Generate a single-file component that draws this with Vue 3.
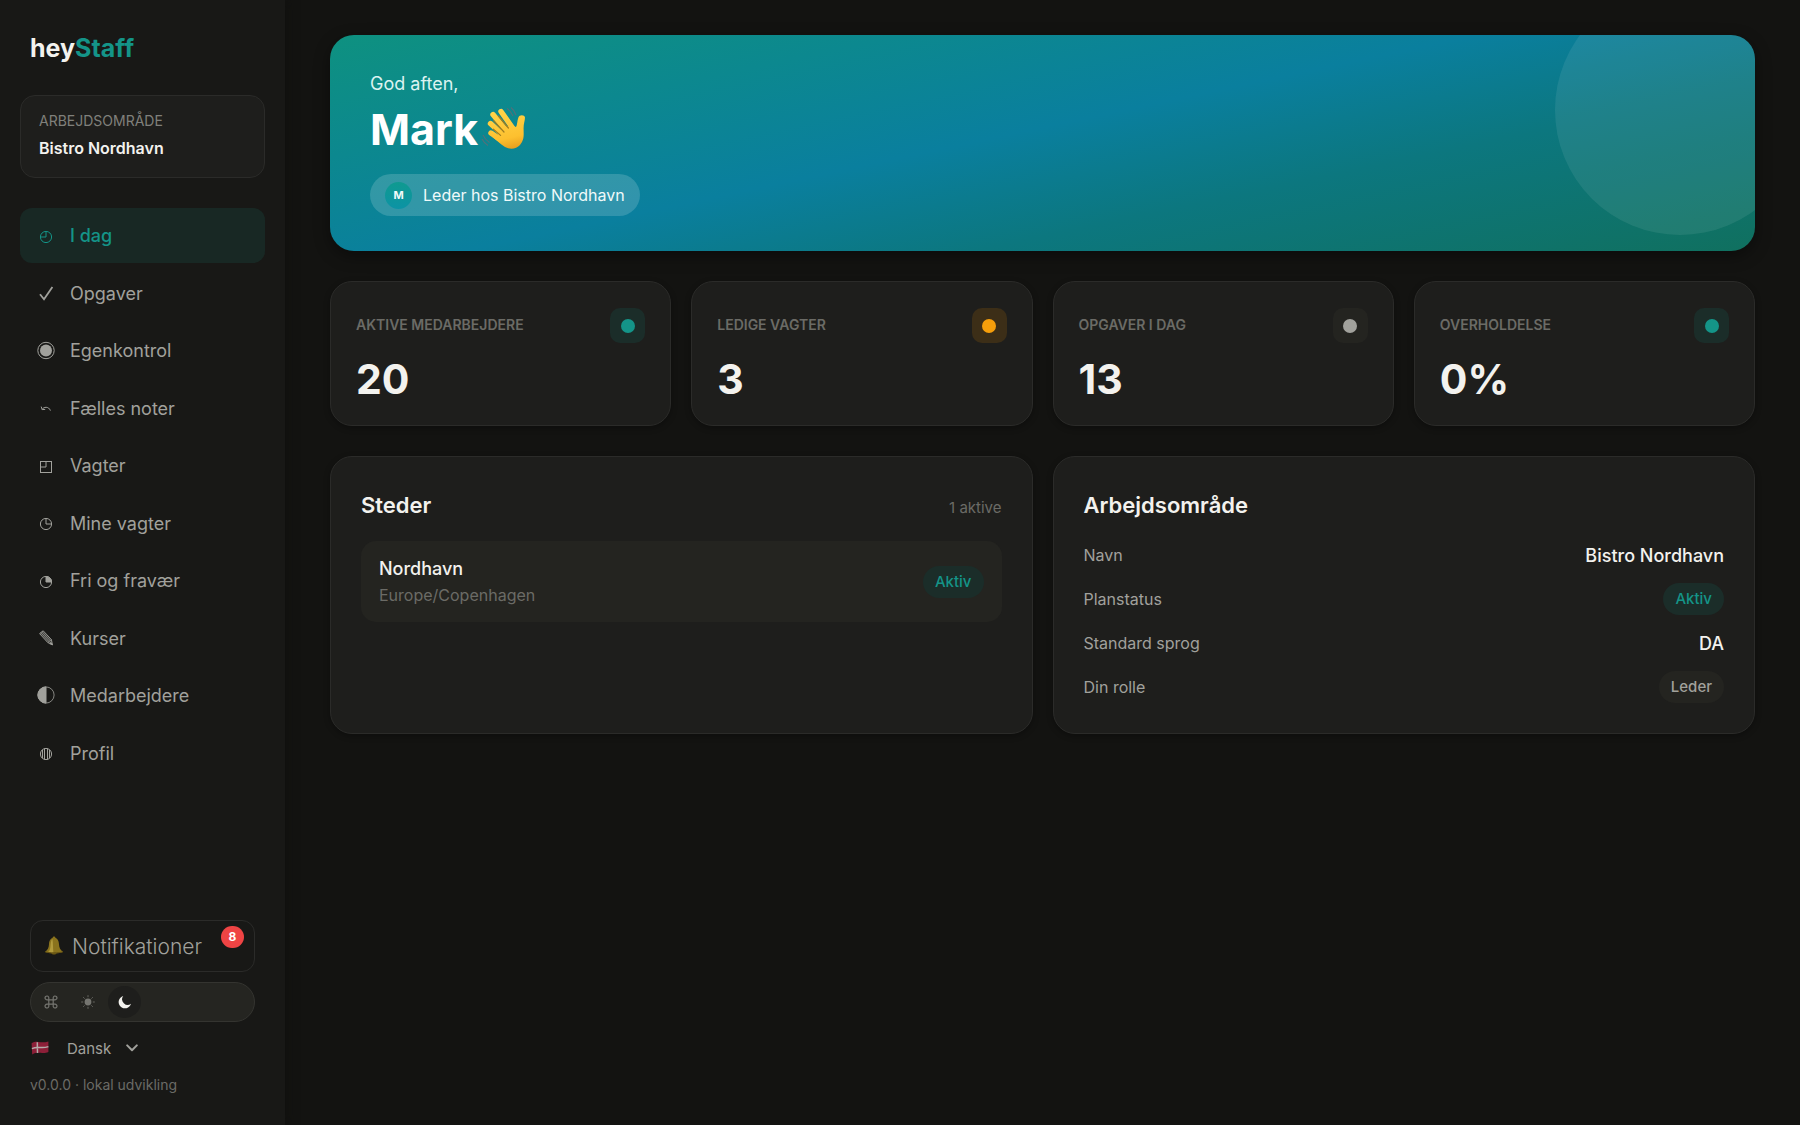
<script setup>
import { ref } from 'vue';

const activeNav = ref('today');
const theme = ref('dark');
const language = ref('da');

const navItems = [
  { id: 'today', label: 'I dag' },
  { id: 'tasks', label: 'Opgaver' },
  { id: 'control', label: 'Egenkontrol' },
  { id: 'notes', label: 'Fælles noter' },
  { id: 'shifts', label: 'Vagter' },
  { id: 'myshifts', label: 'Mine vagter' },
  { id: 'absence', label: 'Fri og fravær' },
  { id: 'courses', label: 'Kurser' },
  { id: 'staff', label: 'Medarbejdere' },
  { id: 'profile', label: 'Profil' },
];

const stats = [
  { label: 'Aktive medarbejdere', value: '20', tone: 'teal' },
  { label: 'Ledige vagter', value: '3', tone: 'amber' },
  { label: 'Opgaver i dag', value: '13', tone: 'neutral' },
  { label: 'Overholdelse', value: '0%', tone: 'teal' },
];

const workspaceRows = [
  { label: 'Navn', value: 'Bistro Nordhavn' },
  { label: 'Planstatus', value: 'Aktiv', badge: 'teal' },
  { label: 'Standard sprog', value: 'DA' },
  { label: 'Din rolle', value: 'Leder', badge: 'neutral' },
];
</script>

<template>
  <div class="layout">
    <aside class="sidebar">
      <div class="logo">hey<span>Staff</span></div>

      <div class="workspace">
        <div class="workspace-label">ARBEJDSOMRÅDE</div>
        <div class="workspace-name">Bistro Nordhavn</div>
      </div>

      <nav class="nav">
        <a
          v-for="item in navItems"
          :key="item.id"
          href="#"
          class="nav-item"
          :class="{ active: activeNav === item.id }"
          @click.prevent="activeNav = item.id"
        >
          <svg class="nav-icon" viewBox="0 0 20 20" fill="none" stroke="currentColor" aria-hidden="true">
            <template v-if="item.id === 'today'">
              <circle cx="10" cy="11" r="5.6" />
              <path d="M10 5.4V11H4.4" />
            </template>
            <path v-else-if="item.id === 'tasks'" d="M4 11.2L8 16.2L16.4 4" stroke-width="1.8" />
            <template v-else-if="item.id === 'control'">
              <circle cx="10" cy="9.5" r="8.2" />
              <circle cx="10" cy="9.5" r="6" fill="currentColor" stroke="none" />
            </template>
            <path v-else-if="item.id === 'notes'" d="M5.2 8.6L6.2 11.6L9.2 11.4M6.2 11.4C7.4 8.8 12.8 8 14.4 12.6" />
            <template v-else-if="item.id === 'shifts'">
              <rect x="4.5" y="5.5" width="11" height="11" />
              <path d="M10 5.5V11H4.5" />
            </template>
            <template v-else-if="item.id === 'myshifts'">
              <circle cx="10" cy="11" r="5.6" />
              <path d="M10 5.4V11H15.6" />
            </template>
            <template v-else-if="item.id === 'absence'">
              <circle cx="10" cy="11" r="5.6" />
              <path d="M10 5.4V11H15.6A5.6 5.6 0 0 0 10 5.4Z" fill="currentColor" />
            </template>
            <template v-else-if="item.id === 'courses'">
              <path d="M3.6 5.6L7.2 2.8L15.4 11.6L16.4 16.6L11.8 14.6Z" fill="currentColor" fill-opacity="0.3" stroke-width="0.9" />
              <path d="M4.8 4.7L13 13.6M6 3.7L14.2 12.6M11.8 14.6L15.4 11.6" stroke-width="0.7" />
              <path d="M14.9 14.6L16.6 16.8L13.8 15.6Z" fill="currentColor" />
            </template>
            <template v-else-if="item.id === 'staff'">
              <circle cx="10" cy="9" r="8.1" stroke-width="0.8" />
              <path d="M10 .9A8.1 8.1 0 0 0 10 17.1Z" fill="currentColor" />
            </template>
            <template v-else>
              <circle cx="10" cy="11" r="5.6" />
              <path d="M6.5 7V15M8.5 5.6V16.4M11.5 5.6V16.4M13.5 7V15" />
            </template>
          </svg>
          <span>{{ item.label }}</span>
        </a>
      </nav>

      <div class="sidebar-footer">
        <button type="button" class="notifications">
          <svg class="bell" viewBox="0 0 20 20" aria-hidden="true">
            <ellipse cx="10" cy="17" rx="2.6" ry="1.8" fill="#5d4c12" />
            <path d="M10 1.4C6.4 1.8 5.2 4.6 5 8.2C4.8 11.6 4 13.6 1 15.8C3.4 18 16.6 18 19 15.8C16 13.6 15.2 11.6 15 8.2C14.8 4.6 13.6 1.8 10 1.4Z" fill="#8a731d" />
            <path d="M8.4 2.8C6.8 4.6 6.6 8 6.4 11C6.2 13.4 5.4 14.8 4.2 16C6 16.6 8 16.7 9.4 16.7C9 12 9 6 8.4 2.8Z" fill="#b29b3c" />
            <circle cx="10" cy="1.8" r="1.3" fill="#8a731d" />
            <path d="M1 15.8C5 17.2 15 17.2 19 15.8" fill="none" stroke="#5d4c12" stroke-width="0.9" />
          </svg>
          <span>Notifikationer</span>
          <span class="count">8</span>
        </button>

        <div class="theme" role="group" aria-label="Tema">
          <button type="button" class="theme-btn" :class="{ on: theme === 'system' }" aria-label="System" @click="theme = 'system'">
            <svg viewBox="0 0 16 16" fill="none" stroke="currentColor" stroke-width="1.2">
              <path d="M5.8 5.8H10.2V10.2H5.8ZM5.8 5.8V4.2A1.9 1.9 0 1 0 3.9 5.8ZM10.2 5.8V4.2A1.9 1.9 0 1 1 12.1 5.8ZM5.8 10.2V11.8A1.9 1.9 0 1 1 3.9 10.2ZM10.2 10.2V11.8A1.9 1.9 0 1 0 12.1 10.2Z" />
            </svg>
          </button>
          <button type="button" class="theme-btn" :class="{ on: theme === 'light' }" aria-label="Lys" @click="theme = 'light'">
            <svg viewBox="0 0 16 16" fill="none" stroke="currentColor" stroke-width="0.8">
              <circle cx="8" cy="8" r="3.4" fill="currentColor" stroke="none" />
              <path d="M8 1.2V3.2M8 12.8V14.8M1.2 8H3.2M12.8 8H14.8M3.2 3.2L4.6 4.6M11.4 11.4L12.8 12.8M3.2 12.8L4.6 11.4M11.4 4.6L12.8 3.2" />
            </svg>
          </button>
          <button type="button" class="theme-btn" :class="{ on: theme === 'dark' }" aria-label="Mørk" @click="theme = 'dark'">
            <svg viewBox="0 0 16 16" fill="currentColor">
              <path d="M6.2 2A6.3 6.3 0 1 0 14 9.8A5.6 5.6 0 0 1 6.2 2Z" />
            </svg>
          </button>
        </div>

        <label class="language">
          <svg class="flag" viewBox="0 0 18 14" aria-hidden="true">
            <path d="M.6 2.2C4 .2 7 1 9.6 1.2C12.6 1.4 14.6 1.2 17.4 .4V11C14.4 12.4 12 12 9.4 11.8C6.4 11.6 4 11.8 1.2 13.4Z" fill="#8c1f38" />
            <path d="M.9 7.6C4.2 6 6.8 6.3 9.6 6.5C12.4 6.7 14.6 6.5 17.4 5.6M6.3 1.2L6.5 12" fill="none" stroke="#b3aaa9" stroke-width="1.5" />
          </svg>
          <select v-model="language" aria-label="Sprog">
            <option value="da">Dansk</option>
            <option value="en">English</option>
          </select>
          <svg class="chevron" viewBox="0 0 12 8" fill="none" stroke="currentColor" stroke-width="2" aria-hidden="true">
            <path d="M1.2 1.4L6 6.2L10.8 1.4" stroke-linecap="round" stroke-linejoin="round" />
          </svg>
        </label>

        <div class="version">v0.0.0 · lokal udvikling</div>
      </div>
    </aside>

    <main class="main">
      <section class="hero">
        <p class="greeting">God aften,</p>
        <h1 class="hero-name">
          Mark
          <svg class="wave" viewBox="0 0 48 48" aria-hidden="true">
            <defs>
              <linearGradient id="skin" gradientUnits="userSpaceOnUse" x1="20" y1="4" x2="30" y2="46">
                <stop offset="0" stop-color="#ffd54a" />
                <stop offset="0.7" stop-color="#fdc02f" />
                <stop offset="1" stop-color="#e69a1c" />
              </linearGradient>
            </defs>
            <g fill="none" stroke="url(#skin)" stroke-linecap="round" stroke-width="5.4">
              <path d="M11 28L24 37" />
              <path d="M10.5 18.5L25 32" />
              <path d="M13 9.5L29 29" />
              <path d="M21 6.5L34 25" />
            </g>
            <path d="M16 32L23 23L30 20L36 22C37.4 20 37 16.5 38.4 12.6C39.4 9.4 44.6 9.6 45 12.6C45 16 43.4 19 43.6 24C43.8 32 44 35 40 40C36.4 44 30.4 45 25 42C20 39 16 35 12 31.6Z" fill="url(#skin)" />
            <path d="M13.4 24.2L20.6 30.4M13.6 15.6L24 27M18.4 11L28.4 23" fill="none" stroke="#a07d20" stroke-width="1.2" stroke-linecap="round" />
            <path d="M27 3.5C30 5 31.5 8 33 11M31 2.5C33.5 4.5 35 7 36 10M3 30C4.5 33.5 6.5 35.5 9.5 37.5M2 34C3.5 37 5.5 39 8 40.5" fill="none" stroke="#53707a" stroke-width="1.1" />
          </svg>
        </h1>
        <div class="role-pill">
          <span class="avatar">M</span>
          <span>Leder hos Bistro Nordhavn</span>
        </div>
      </section>

      <section class="stats">
        <article v-for="stat in stats" :key="stat.label" class="stat-card">
          <div class="stat-head">
            <span class="stat-label">{{ stat.label }}</span>
            <span class="stat-icon" :class="stat.tone"></span>
          </div>
          <div class="stat-value">{{ stat.value }}</div>
        </article>
      </section>

      <section class="panels">
        <article class="panel">
          <header class="panel-head">
            <h2>Steder</h2>
            <span class="panel-note">1 aktive</span>
          </header>
          <div class="place">
            <div>
              <div class="place-name">Nordhavn</div>
              <div class="place-zone">Europe/Copenhagen</div>
            </div>
            <span class="badge teal">Aktiv</span>
          </div>
        </article>

        <article class="panel">
          <header class="panel-head">
            <h2>Arbejdsområde</h2>
          </header>
          <dl class="details">
            <div v-for="row in workspaceRows" :key="row.label" class="detail-row">
              <dt>{{ row.label }}</dt>
              <dd>
                <span v-if="row.badge" class="badge" :class="row.badge">{{ row.value }}</span>
                <template v-else>{{ row.value }}</template>
              </dd>
            </div>
          </dl>
        </article>
      </section>
    </main>
  </div>
</template>

<style>
body {
  background: #131311;
}
</style>

<style scoped>
.layout {
  display: flex;
  min-height: 100vh;
  color: #f3f2ee;
  font-family: Inter, "Liberation Sans", sans-serif;
  font-size: 18px;
}

.layout *,
.layout {
  box-sizing: border-box;
}

.sidebar {
  display: flex;
  flex: 0 0 285px;
  flex-direction: column;
  padding: 30px 20px;
  background: #181816;
  box-shadow: 1px 0 10px #10100e;
}

.logo {
  padding: 0 10px;
  font-size: 25px;
  font-weight: 700;
  line-height: 37px;
}

.logo span {
  color: #149488;
}

.workspace {
  margin-top: 28px;
  padding: 13px 18px 14px;
  border: 1px solid #2b2b29;
  border-radius: 15px;
  background: #1e1e1c;
}

.workspace-label {
  color: #80807b;
  font-size: 14px;
  line-height: 24px;
}

.workspace-name {
  font-size: 16px;
  font-weight: 600;
  line-height: 30px;
}

.nav {
  display: flex;
  flex-direction: column;
  justify-content: space-between;
  min-height: 573px;
  margin-top: 30px;
}

.nav-item {
  display: flex;
  align-items: center;
  gap: 14px;
  padding: 0 16px;
  border-radius: 12px;
  color: #a1a19c;
  line-height: 55px;
  text-decoration: none;
}

.nav-item.active {
  background: #182824;
  color: #149488;
  font-weight: 500;
}

.nav-icon {
  width: 20px;
  height: 20px;
}

.sidebar-footer {
  display: flex;
  flex-direction: column;
  gap: 10px;
  margin-top: auto;
  padding: 0 10px;
}

.notifications {
  position: relative;
  display: flex;
  align-items: center;
  gap: 8px;
  height: 52px;
  padding: 0 13px;
  border: 1px solid #2b2b29;
  border-radius: 13px;
  background: transparent;
  color: #a1a19c;
  font-family: inherit;
  font-size: 21px;
  font-weight: 300;
  cursor: pointer;
}

.bell {
  width: 20px;
  height: 20px;
}

.count {
  position: absolute;
  top: 5px;
  right: 10px;
  width: 23px;
  border-radius: 12px;
  background: #ef4444;
  color: #fff;
  font-size: 12px;
  font-weight: 700;
  line-height: 22px;
  text-align: center;
}

.theme {
  display: flex;
  gap: 4px;
  padding: 3px;
  border: 1px solid #343430;
  border-radius: 20px;
  background: #252521;
}

.theme-btn {
  display: flex;
  align-items: center;
  justify-content: center;
  width: 33px;
  height: 32px;
  padding: 0;
  border: 0;
  border-radius: 50%;
  background: transparent;
  color: #757570;
  cursor: pointer;
}

.theme-btn.on {
  background: #1e1e1c;
  color: #f3f2ee;
}

.theme-btn svg {
  width: 16px;
  height: 16px;
}

.language {
  display: flex;
  align-items: center;
  height: 32px;
  color: #a1a19c;
}

.flag {
  width: 20px;
  height: 14px;
}

.language select {
  width: 76px;
  padding: 0 0 0 17px;
  border: 0;
  appearance: none;
  background: transparent;
  color: inherit;
  font-family: inherit;
  font-size: 15px;
}

.chevron {
  width: 12px;
  height: 8px;
}

.version {
  color: #6b6b66;
  font-size: 14px;
  line-height: 21px;
}

.main {
  flex: 1;
  min-width: 0;
  padding: 35px 45px;
}

.hero {
  position: relative;
  overflow: hidden;
  padding: 35px 40px;
  border-radius: 24px;
  background: linear-gradient(168deg, #0e9180, #0a7f9e 47%, #0c777f 68%, #10705f);
  box-shadow: 0 5px 16px rgba(0, 0, 0, 0.4);
}

.hero::after {
  position: absolute;
  top: -50px;
  right: -50px;
  width: 250px;
  height: 250px;
  border-radius: 50%;
  background: rgba(255, 255, 255, 0.08);
  content: "";
}

.greeting {
  margin: 0;
  color: #dcf3f1;
  font-size: 18px;
  line-height: 28px;
}

.hero-name {
  display: flex;
  align-items: center;
  gap: 2px;
  margin: 3px 0 17px;
  color: #fff;
  font-size: 43px;
  font-weight: 700;
  line-height: 56px;
}

.wave {
  width: 48px;
  height: 48px;
}

.role-pill {
  display: inline-flex;
  align-items: center;
  gap: 11px;
  height: 42px;
  padding: 0 15px;
  border-radius: 21px;
  background: rgba(255, 255, 255, 0.16);
  color: #f0fafa;
  font-size: 16px;
  vertical-align: top;
}

.avatar {
  width: 27px;
  border-radius: 50%;
  background: linear-gradient(#0f9a90, #0c93a5);
  font-size: 11px;
  font-weight: 700;
  line-height: 27px;
  text-align: center;
}

.stats {
  display: grid;
  grid-template-columns: repeat(4, 1fr);
  gap: 20px;
  margin-top: 30px;
}

.stat-card,
.panel {
  border: 1px solid #2b2b29;
  border-radius: 22px;
  background: #1e1e1c;
  box-shadow: 0 2px 6px rgba(0, 0, 0, 0.3);
}

.stat-card {
  padding: 26px 25px 21px;
}

.stat-head {
  display: flex;
  justify-content: space-between;
}

.stat-label {
  color: #6b6b66;
  font-size: 14px;
  font-weight: 600;
  line-height: 34px;
  text-transform: uppercase;
}

.stat-icon {
  display: flex;
  align-items: center;
  justify-content: center;
  width: 35px;
  height: 35px;
  border-radius: 10px;
}

.stat-icon::before {
  width: 14px;
  height: 14px;
  border-radius: 50%;
  background: currentColor;
  content: "";
}

.teal {
  background: #1b2d29;
  color: #149488;
}

.amber {
  background: #3c2e17;
  color: #f59e0b;
}

.neutral {
  background: #242420;
  color: #a1a19c;
}

.stat-value {
  margin-top: 11px;
  font-size: 41px;
  font-weight: 700;
  line-height: 50px;
}

.panels {
  display: grid;
  grid-template-columns: repeat(2, 1fr);
  gap: 20px;
  margin-top: 30px;
}

.panel {
  padding: 30px;
}

.panel-head {
  display: flex;
  align-items: baseline;
  justify-content: space-between;
}

.panel-head h2 {
  margin: 0;
  font-size: 22px;
  font-weight: 600;
  line-height: 36px;
}

.panel-note {
  color: #6b6b66;
  font-size: 15px;
}

.place {
  display: flex;
  align-items: center;
  justify-content: space-between;
  margin-top: 18px;
  padding: 14px 18px;
  border-radius: 15px;
  background: #242420;
}

.place-name {
  font-size: 18px;
  font-weight: 500;
  line-height: 28px;
}

.place-zone {
  color: #6b6b66;
  font-size: 16px;
  line-height: 25px;
}

.badge {
  padding: 0 12px;
  border-radius: 16px;
  font-size: 15px;
  font-weight: 500;
  line-height: 32px;
}

.details {
  display: flex;
  flex-direction: column;
  gap: 12px;
  margin: 16px 0 0;
}

.detail-row {
  display: flex;
  align-items: center;
  justify-content: space-between;
  height: 32px;
}

.detail-row dt {
  color: #a1a19c;
  font-size: 16px;
}

.detail-row dd {
  display: flex;
  margin: 0;
  font-size: 18px;
  font-weight: 500;
}
</style>
